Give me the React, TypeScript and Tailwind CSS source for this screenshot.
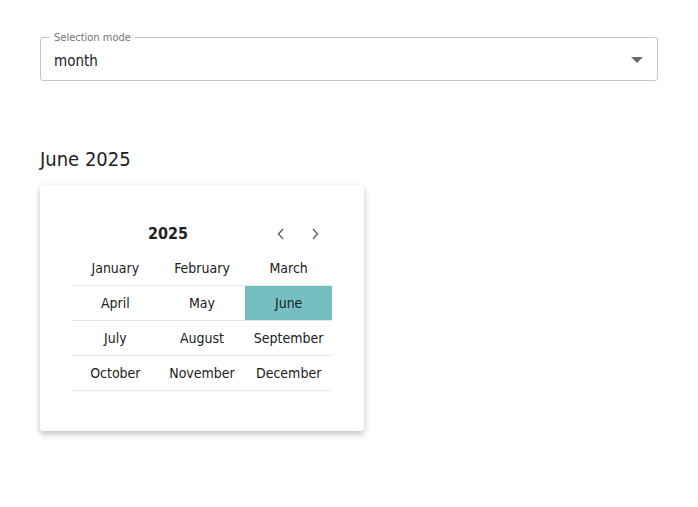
import React, { useState } from 'react';

const MONTHS = [
  'January', 'February', 'March',
  'April', 'May', 'June',
  'July', 'August', 'September',
  'October', 'November', 'December',
];

const font = "font-['Liberation_Sans_Narrow','DejaVu_Sans_Condensed',sans-serif]";

export default function App() {
  const [selected, setSelected] = useState(5);

  return (
    <div className={`min-h-screen bg-white px-10 pt-[37px] text-[#212121] ${font}`}>
      <div className="relative h-11 rounded-[3px] border border-[#c4c4c4]">
        <span className="absolute -top-[8px] left-[9px] bg-white px-[4px] text-[11px] leading-4 text-[#757575]">
          Selection mode
        </span>
        <div className="flex h-full items-center justify-between pl-[13px] pr-[14px] pt-[4px]">
          <span className="text-[15px]">month</span>
          <svg width="12" height="6" viewBox="0 0 12 6" className="-mt-[2px]">
            <path d="M0 0 L12 0 L6 6 Z" fill="#6b6b6b" />
          </svg>
        </div>
      </div>

      <h2 className="mt-[64px] text-[20px] leading-7">June 2025</h2>

      <div className="mt-[12px] w-[324px] rounded-[3px] bg-white px-8 pb-10 pt-8 shadow-[0_3px_6px_rgba(0,0,0,0.25)]">
        <div className="flex h-[34px] items-center">
          <div className="flex-1 text-center text-[16px] font-bold">2025</div>
          <button className="flex h-[34px] w-[34px] items-center justify-center text-[#666]">
            <svg width="8" height="12" viewBox="0 0 8 12" fill="none" stroke="currentColor" strokeWidth="1.5">
              <path d="M6 1 L1.5 6 L6 11" />
            </svg>
          </button>
          <button className="flex h-[34px] w-[34px] items-center justify-center text-[#666]">
            <svg width="8" height="12" viewBox="0 0 8 12" fill="none" stroke="currentColor" strokeWidth="1.5">
              <path d="M2 1 L6.5 6 L2 11" />
            </svg>
          </button>
        </div>
        <div className="grid grid-cols-3">
          {MONTHS.map((m, i) => (
            <button
              key={m}
              onClick={() => setSelected(i)}
              className={`h-[35px] border-b border-[#e8e8e8] text-[14px] ${
                i === selected ? 'bg-[#74bfbf]' : 'bg-white'
              }`}
            >
              {m}
            </button>
          ))}
        </div>
      </div>
    </div>
  );
}
